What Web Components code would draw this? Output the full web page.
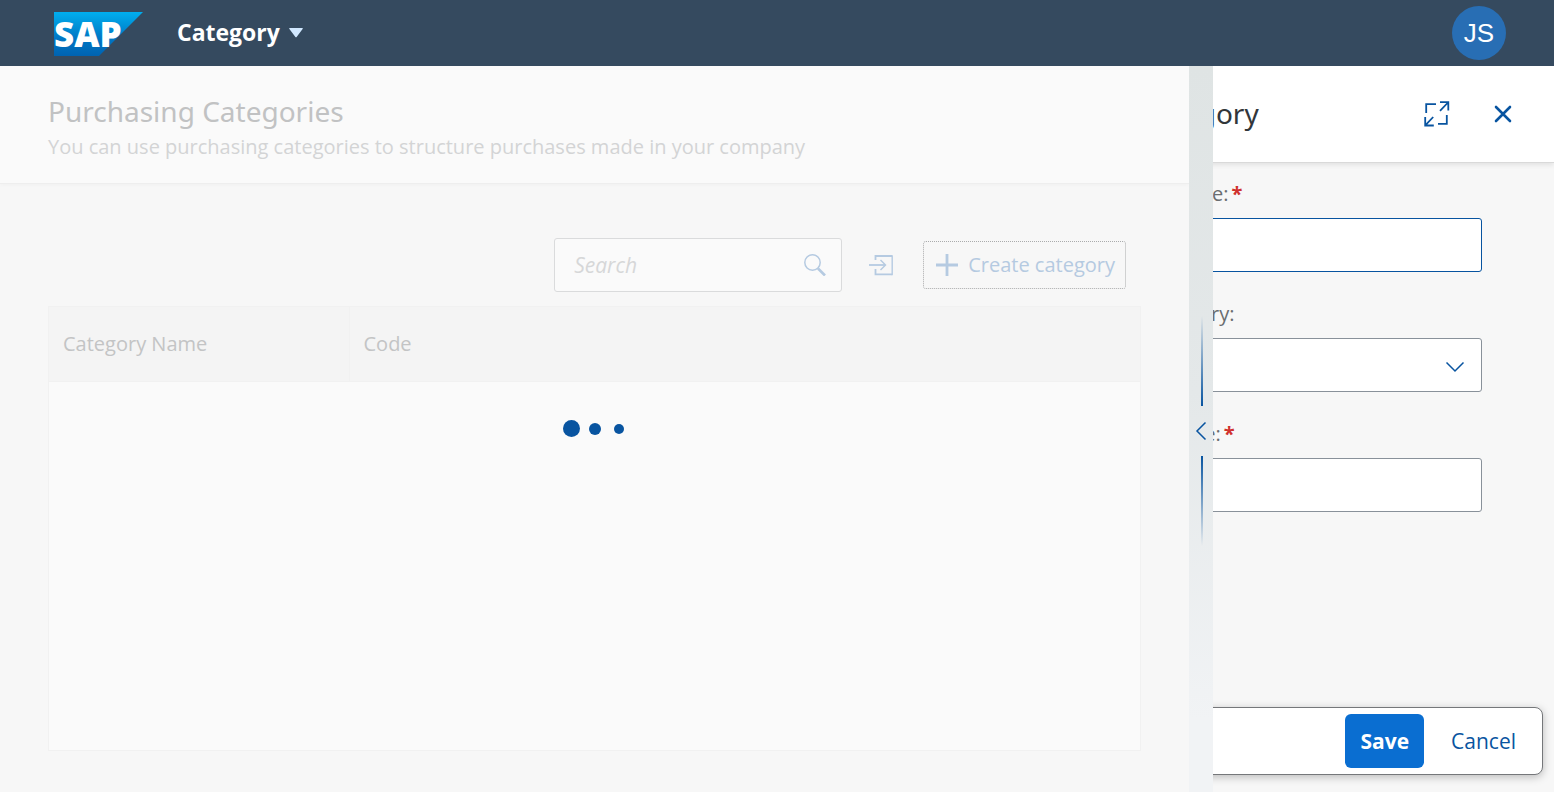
<!DOCTYPE html>
<html lang="en">
<head>
<meta charset="utf-8">
<title>Purchasing Categories</title>
<style>
  html, body { margin: 0; height: 100%; }
  body {
    font-family: "Open Sans", "Noto Sans", sans-serif;
    font-size: 20px;
    line-height: 28px;
    color: #32363a;
    background: #f7f7f7;
    overflow: hidden;
    --accent: #0854a0;
    --accent-dim: #b5cae1;
    --heading-font: "Noto Sans", "Open Sans", sans-serif;
  }
</style>
</head>
<body>
<app-shell>
  <shell-bar slot="bar" heading="Category" initials="JS"></shell-bar>
  <category-list slot="main"></category-list>
  <column-splitter slot="splitter"></column-splitter>
  <side-panel slot="side" heading="Create Category">
    <form-field label="Category Name:" required active></form-field>
    <form-field label="Parent Category:" kind="select"></form-field>
    <form-field label="Category Code:" required></form-field>
    <panel-actions slot="footer"></panel-actions>
  </side-panel>
</app-shell>

<script>
const define = (name, render) => {
  customElements.define(name, class extends HTMLElement {
    constructor() {
      super();
      this.attachShadow({ mode: "open" });
    }
    connectedCallback() {
      this.shadowRoot.innerHTML = "<style>*{box-sizing:border-box}button,input,select{font:inherit;margin:0}</style>" + render(this);
    }
  });
};

define("app-shell", () => `
  <style>
    :host { display: flex; flex-direction: column; height: 100vh; }
    .columns { flex: 1; min-height: 0; display: grid; grid-template-columns: minmax(0, 1fr) 24px 341px; }
    ::slotted(*) { min-width: 0; min-height: 0; }
  </style>
  <slot name="bar"></slot>
  <div class="columns">
    <slot name="main"></slot>
    <slot name="splitter"></slot>
    <slot name="side"></slot>
  </div>`);

define("shell-bar", el => `
  <style>
    :host { display: block; background: #354a5f; }
    header { display: flex; align-items: center; height: 66px; padding: 0 48px 0 54px; }
    svg { display: block; margin-top: 2px; overflow: visible; }
    .menu {
      display: flex; align-items: center; gap: 9px; margin: 0 0 2px 28px; padding: 0 6px;
      border: 0; background: none; color: #fff; font-size: 23px; font-weight: 700; line-height: 36px;
    }
    .avatar {
      margin-left: auto; width: 54px; height: 54px; padding: 0; border: 0; border-radius: 50%;
      background: #286eb4; color: #fff; font-family: "Liberation Sans", sans-serif; font-size: 26px;
    }
  </style>
  <header>
    <svg width="89" height="44" viewBox="0 0 89 44" role="img" aria-label="SAP">
      <defs>
        <linearGradient id="g" x1="0" y1="0" x2="0" y2="1">
          <stop offset="0" stop-color="#00aeef"/><stop offset=".25" stop-color="#0097dc"/>
          <stop offset=".6" stop-color="#0077c5"/><stop offset="1" stop-color="#0063b1"/>
        </linearGradient>
      </defs>
      <path d="M0 0H89L45 44H0Z" fill="url(#g)"/>
      <text x="0" y="35" fill="#fff" font-family="Open Sans, sans-serif" font-weight="800" font-size="35">SAP</text>
    </svg>
    <button class="menu" aria-haspopup="menu">${el.getAttribute("heading")}
      <svg width="14" height="10" viewBox="0 0 14 10"><path d="M.8 0H13.2Q14.4 0 13.6 1L7.8 8.8Q7 9.8 6.2 8.8L.4 1Q-.4 0 .8 0Z" fill="#d1e8ff"/></svg>
    </button>
    <button class="avatar">${el.getAttribute("initials")}</button>
  </header>`);

define("category-list", () => `
  <style>
    :host { display: flex; flex-direction: column; }
    header {
      padding: 27px 48px 20px; background: #fafafa; border-bottom: 1px solid #eeeeee;
      box-shadow: 0 2px 3px rgba(0,0,0,.02);
    }
    h1 { margin: 0; font-family: var(--heading-font); font-size: 28px; line-height: 36px; font-weight: 400; color: #c1c2c3; }
    p { margin: 0; padding: 4px 0 2px; color: #d3d4d5; }
    .tools { display: flex; align-items: center; justify-content: flex-end; padding: 54px 63px 14px; }
    .search {
      display: flex; align-items: center; width: 288px; height: 54px; padding: 0 15px 0 19px;
      border: 1px solid #dadbdc; border-radius: 3px; background: #fafafa;
    }
    input { flex: 1; min-width: 0; padding: 0; border: 0; outline: 0; background: none; font-size: 21px; }
    input::placeholder { color: #d6d7d8; font-style: italic; opacity: 1; }
    button { padding: 0; border: 0; background: none; color: var(--accent-dim); }
    svg { display: block; fill: none; stroke: var(--accent-dim); }
    .import { margin: 0 30px 0 27px; }
    .create {
      display: flex; align-items: center; gap: 10px; height: 48px; padding: 0 10px 0 12px;
      border: 1px dotted #aaabac; border-radius: 3px;
    }
    .grid {
      flex: 1; margin: 0 48px 41px; border: 1px solid #f1f1f1; background: #fafafa;
      display: flex; flex-direction: column;
    }
    table { width: 100%; border-collapse: collapse; table-layout: fixed; }
    th {
      height: 74px; padding: 0 14px; text-align: left; font-weight: 400; color: #c3c4c5;
      background: #f4f4f4; border-bottom: 1px solid #f1f1f1;
    }
    th:first-child { width: 300px; border-right: 1px solid #f1f1f1; }
    .busy { display: flex; justify-content: center; align-items: center; gap: 9px; padding: 38px 2px 0 0; height: 56px; }
    i { border-radius: 50%; background: var(--accent); width: 12px; height: 12px; }
    i:first-child { width: 17px; height: 17px; }
    i:last-child { width: 10px; height: 10px; margin-left: 4px; }
  </style>
  <header>
    <h1>Purchasing Categories</h1>
    <p>You can use purchasing categories to structure purchases made in your company</p>
  </header>
  <div class="tools">
    <div class="search">
      <input type="text" placeholder="Search" aria-label="Search">
      <button aria-label="Run search">
        <svg width="22" height="22" viewBox="0 0 22 22"><circle cx="8.5" cy="8.5" r="7.7" stroke-width="1.5"/><path d="M14 14.5L21 21.5" stroke-width="2.6"/></svg>
      </button>
    </div>
    <button class="import" aria-label="Import">
      <svg width="24" height="22" viewBox="0 0 24 22"><path d="M6.5 6V2H23M6.5 15V20.3H23" stroke-width="1.8"/><path d="M23.2 1.2V21.2" stroke-width="1.4"/><path d="M0 11H16" stroke-width="1.8"/><path d="M11.5 6L16.5 11L11.5 16" stroke-width="1.4"/></svg>
    </button>
    <button class="create">
      <svg width="22" height="22" viewBox="0 0 22 22"><path d="M0 11H22M11 0V22" stroke-width="2.8"/></svg>
      Create category
    </button>
  </div>
  <div class="grid">
    <table><thead><tr><th scope="col">Category Name</th><th scope="col">Code</th></tr></thead></table>
    <div class="busy" role="status" aria-label="Loading"><i></i><i></i><i></i></div>
  </div>`);

define("column-splitter", () => `
  <style>
    :host {
      display: flex; flex-direction: column; align-items: center; justify-content: center; padding-top: 4px;
      background: linear-gradient(#dfe4e4, #e4e8e9 45%, #f1f3f5 90%);
    }
    span { width: 2px; height: 90px; margin-left: 2px; background: linear-gradient(to top, var(--accent), transparent); }
    span:last-child { background: linear-gradient(to bottom, var(--accent), transparent); }
    button { width: 24px; height: 50px; padding: 0; border: 0; background: none; }
    svg { display: block; margin: auto; }
  </style>
  <span></span>
  <button aria-label="Expand column">
    <svg width="12" height="20" viewBox="0 0 12 20"><path d="M10.5 1.5L2 10L10.5 18.5" fill="none" stroke="#0854a0" stroke-width="1.5"/></svg>
  </button>
  <span></span>`);

define("side-panel", el => `
  <style>
    :host { display: flex; justify-content: flex-end; overflow: hidden; }
    section { flex: 0 0 508px; display: flex; flex-direction: column; }
    header {
      display: flex; align-items: center; height: 97px; padding: 0 42px 0 0;
      background: #fff; border-bottom: 1px solid #d9d9d9; box-shadow: 0 2px 5px rgba(0,0,0,.09);
    }
    h2 { flex: 1; margin: 0; padding-bottom: 2px; font-family: var(--heading-font); font-size: 28px; line-height: 36px; font-weight: 400; }
    button { display: block; padding: 0; border: 0; background: none; }
    svg { display: block; fill: none; stroke: var(--accent); }
    .close { margin-left: 44px; }
    .body { flex: 1; display: flex; flex-direction: column; gap: 28px; padding: 17px 72px 0 33px; }
    footer { padding: 0 11px 17px 0; }
  </style>
  <section>
    <header>
      <h2>${el.getAttribute("heading")}</h2>
      <button aria-label="Full screen">
        <svg width="26" height="26" viewBox="0 0 26 26"><path d="M12 3.2H2.2V12M14 22.8H22.8V14" stroke-width="1.8"/><path d="M16 1.2H24.3V9.5M24 1.5L16 9.8M1.2 16V24.5H9.8M1.5 24.2L9.2 16" stroke-width="1.8"/></svg>
      </button>
      <button class="close" aria-label="Close">
        <svg width="18" height="18" viewBox="0 0 18 18"><path d="M2 2L16 16M16 2L2 16" stroke-width="2.6" stroke-linecap="round"/></svg>
      </button>
    </header>
    <div class="body"><slot></slot></div>
    <footer><slot name="footer"></slot></footer>
  </section>`);

define("form-field", el => {
  const select = el.getAttribute("kind") === "select";
  return `
  <style>
    :host { display: block; }
    label { display: flex; gap: 3px; height: 28px; margin-bottom: 10px; color: #6a6d70; }
    b { color: #d0312d; }
    .box { position: relative; }
    input, select {
      display: block; width: 100%; height: 54px; padding: 0 16px; border: 1px solid #89919a;
      border-radius: 3px; background: #fff; color: #32363a; appearance: none; outline: 0;
    }
    :host([active]) input { border-color: var(--accent); }
    svg { position: absolute; right: 17px; top: 23px; pointer-events: none; }
  </style>
  <label for="c">${el.getAttribute("label")}${el.hasAttribute("required") ? "<b>*</b>" : ""}</label>
  <div class="box">${select
    ? `<select id="c"></select><svg width="20" height="12" viewBox="0 0 20 12"><path d="M1.5 1.5L10 10L18.5 1.5" fill="none" stroke="#0854a0" stroke-width="1.5"/></svg>`
    : `<input id="c" type="text">`}</div>`;
});

define("panel-actions", () => `
  <style>
    :host {
      display: flex; justify-content: flex-end; gap: 12px; padding: 6px 11px 6px;
      background: #fff; border: 1px solid #75777a; border-radius: 8px;
      box-shadow: 0 2px 8px rgba(0,0,0,.25);
    }
    button { height: 54px; padding: 0 15px; border: 0; border-radius: 6px; background: none; color: var(--accent); font-size: 21px; }
    .save { background: #0a6ed1; color: #fff; font-weight: 700; }
  </style>
  <button class="save">Save</button>
  <button>Cancel</button>`);
</script>
</body>
</html>
